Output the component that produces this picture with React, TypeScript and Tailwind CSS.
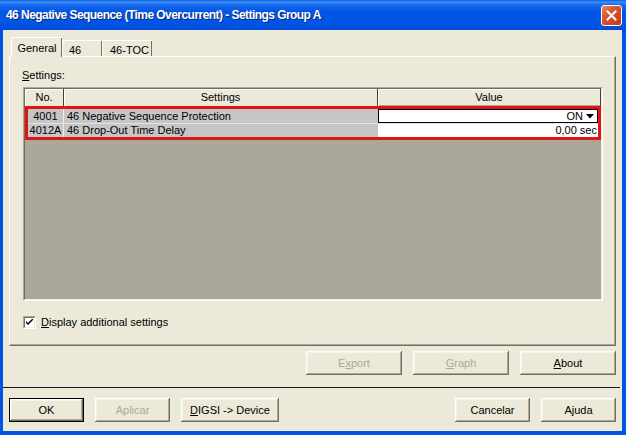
import React from 'react';

// 3D classic look used by buttons
const raised =
  'bg-[#ece9d8] shadow-[inset_-1px_-1px_#716f64,inset_1px_1px_#ffffff,inset_-2px_-2px_#aca899,inset_2px_2px_#f5f4ea]';

type BtnProps = {
  children: React.ReactNode;
  width: string;
  disabled?: boolean;
  isDefault?: boolean;
};

const Btn: React.FC<BtnProps> = ({ children, width, disabled, isDefault }) => (
  <div
    className={`${width} h-[24px] ${isDefault ? 'border border-black' : ''} ${raised} flex items-center justify-center text-[11px] ${
      disabled ? 'text-[#aca899]' : 'text-black'
    }`}
  >
    {children}
  </div>
);

const CloseButton = () => (
  <div className="w-[21px] h-[21px] rounded-[3px] border border-white bg-[linear-gradient(135deg,#e8886a_0%,#d9542e_40%,#c4391a_100%)] flex items-center justify-center">
    <svg width="11" height="11" viewBox="0 0 11 11">
      <path d="M1.5 1.5 L9.5 9.5 M9.5 1.5 L1.5 9.5" stroke="#fff" strokeWidth="2" strokeLinecap="square" />
    </svg>
  </div>
);

const App: React.FC = () => {
  return (
    <div className="w-[626px] h-[435px] flex flex-col bg-[#0055e5] font-['Liberation_Sans',Arial,sans-serif] text-black select-none">
      {/* 타이틀 바 */}
      <div className="h-[30px] shrink-0 flex items-center justify-between pl-[6px] pr-[4px] bg-[linear-gradient(to_bottom,#0a5fe4_0%,#3d8ff5_7%,#1769ec_16%,#0056e6_40%,#0055e5_80%,#004bd8_100%)]">
        <span className="text-white font-bold text-[12px] tracking-[-0.55px] [text-shadow:1px_1px_#0a246a]">
          46 Negative Sequence (Time Overcurrent) - Settings Group A
        </span>
        <CloseButton />
      </div>

      {/* 본문 */}
      <div className="flex-1 ml-[3px] mr-[4px] mb-[4px] bg-[#ece9d8] flex flex-col text-[11px]">
        {/* 탭 */}
        <div className="h-[26px] shrink-0 flex items-end pl-[8px]">
          <div className="relative z-10 w-[51px] h-[20px] mb-[-1px] bg-[#ece9d8] border-t border-l border-white shadow-[inset_-1px_0_#716f64] flex items-start pt-[2px] justify-center">
            General
          </div>
          <div className="w-[40px] h-[16px] border-t border-l border-white shadow-[inset_-1px_0_#716f64] flex items-start pt-[1px] pl-[6px]">
            46
          </div>
          <div className="w-[50px] h-[16px] border-t border-l border-white shadow-[inset_-1px_0_#716f64] flex items-start pt-[1px] pl-[7px]">
            46-TOC
          </div>
        </div>

        {/* 탭 패널 */}
        <div className="ml-[6px] w-[607px] h-[290px] shrink-0 border border-t-white border-l-white border-r-[#716f64] border-b-[#716f64] shadow-[inset_-1px_-1px_#aca899]">
          <div className="flex flex-col px-[13px]">
            <div className="mt-[12px] h-[13px] leading-[13px] -ml-[1px]">
              <u>S</u>ettings:
            </div>

            {/* 테이블 */}
            <div className="mt-[5px] w-[580px] h-[214px] border border-t-[#aca899] border-l-[#aca899] border-r-white border-b-white">
              <div className="w-full h-full border border-t-[#716f64] border-l-[#716f64] border-r-[#f1efe2] border-b-[#f1efe2] bg-[#aca899] flex flex-col">
                <div className="h-[17px] shrink-0 flex bg-[#ece9d8]">
                  <div className="w-[39px] border-r border-[#404040] shadow-[inset_1px_1px_#fff] flex items-center justify-center">
                    No.
                  </div>
                  <div className="w-[314px] border-r border-[#404040] shadow-[inset_1px_1px_#fff] flex items-center justify-center">
                    Settings
                  </div>
                  <div className="flex-1 border-r border-[#404040] shadow-[inset_1px_1px_#fff,inset_0_-1px_#aca899] flex items-center justify-center">
                    Value
                  </div>
                </div>

                <div className="border-[3px] border-[#e01414] flex flex-col">
                  <div className="h-[15px] flex bg-[#c6c6c6] border-b border-[#e4e4e4]">
                    <div className="w-[36px] border-r border-[#ececec] flex items-center justify-center">4001</div>
                    <div className="w-[314px] pl-[3px] flex items-center">46 Negative Sequence Protection</div>
                    <div className="flex-1 bg-white border border-black flex items-center justify-end pr-[3px] gap-[3px]">
                      <span>ON</span>
                      <svg width="8" height="5" viewBox="0 0 8 5">
                        <path d="M0 0 H8 L4 4.5 Z" fill="#000" />
                      </svg>
                    </div>
                  </div>
                  <div className="h-[13px] flex bg-[#c6c6c6]">
                    <div className="w-[36px] border-r border-[#ececec] flex items-center justify-center">4012A</div>
                    <div className="w-[314px] pl-[3px] flex items-center">46 Drop-Out Time Delay</div>
                    <div className="flex-1 bg-white flex items-center justify-end pr-[1px]">0,00 sec</div>
                  </div>
                </div>
              </div>
            </div>

            {/* 체크박스 */}
            <div className="mt-[15px] h-[13px] flex items-center gap-[5px]">
              <div className="w-[13px] h-[13px] border border-t-[#aca899] border-l-[#aca899] border-r-white border-b-white">
                <div className="w-full h-full bg-white border border-t-[#716f64] border-l-[#716f64] border-r-[#f1efe2] border-b-[#f1efe2] flex items-center justify-center">
                  <svg width="7" height="7" viewBox="0 0 7 7">
                    <path d="M0 2 L0 4 L2 6 L7 1 L7 -1 L2 4 Z" fill="#000" />
                  </svg>
                </div>
              </div>
              <span>
                <u>D</u>isplay additional settings
              </span>
            </div>
          </div>
        </div>

        {/* Export / Graph / About */}
        <div className="mt-[5px] h-[24px] shrink-0 flex justify-end gap-[11px] pr-[6px]">
          <Btn width="w-[96px]" disabled>
            E<u>x</u>port
          </Btn>
          <Btn width="w-[96px]" disabled>
            <u>G</u>raph
          </Btn>
          <Btn width="w-[96px]">
            <u>A</u>bout
          </Btn>
        </div>

        <div className="mt-[12px] h-[1px] shrink-0 bg-[#1a1a1a] mr-[2px]" />

        {/* 하단 버튼 */}
        <div className="mt-[10px] h-[24px] shrink-0 flex justify-between px-[6px]">
          <div className="flex gap-[11px]">
            <Btn width="w-[75px]" isDefault>
              OK
            </Btn>
            <Btn width="w-[75px]" disabled>
              Aplicar
            </Btn>
            <Btn width="w-[98px]">
              <span>
                <u>D</u>IGSI -&gt; Device
              </span>
            </Btn>
          </div>
          <div className="flex gap-[11px]">
            <Btn width="w-[75px]">Cancelar</Btn>
            <Btn width="w-[75px]">Ajuda</Btn>
          </div>
        </div>
      </div>
    </div>
  );
};

export default App;
